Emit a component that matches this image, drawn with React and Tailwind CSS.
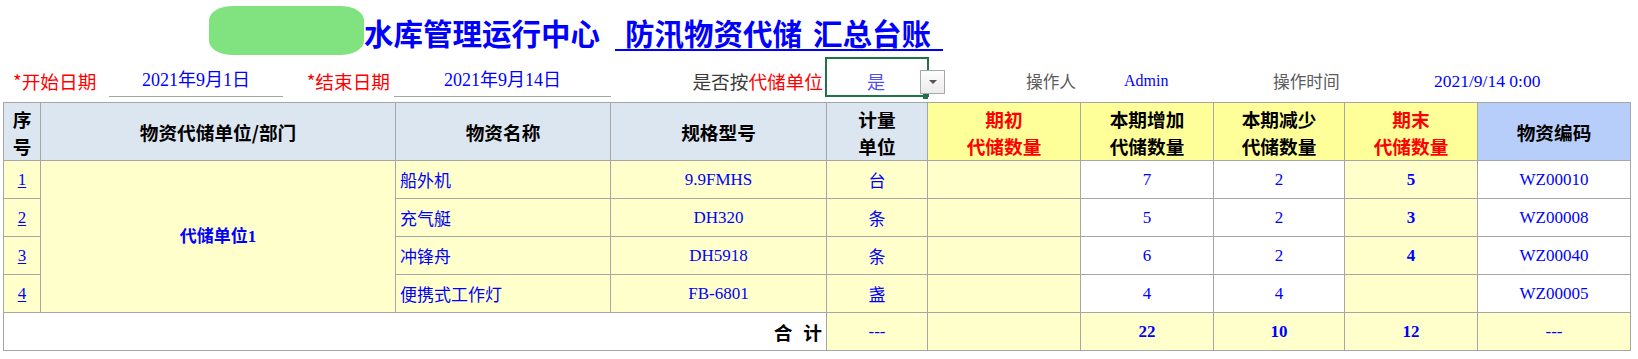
const sans = "font-['Noto_Sans_CJK_SC','Noto_Sans',sans-serif]";
const serif = "font-['Liberation_Serif','Noto_Sans_CJK_SC',serif]";

const rows = [
  { no: 1, name: "船外机", spec: "9.9FMHS", unit: "台", add: 7, sub: 2, end: 5, code: "WZ00010" },
  { no: 2, name: "充气艇", spec: "DH320", unit: "条", add: 5, sub: 2, end: 3, code: "WZ00008" },
  { no: 3, name: "冲锋舟", spec: "DH5918", unit: "条", add: 6, sub: 2, end: 4, code: "WZ00040" },
  { no: 4, name: "便携式工作灯", spec: "FB-6801", unit: "盏", add: 4, sub: 4, end: "", code: "WZ00005" },
];

// 表头、单元格公共样式
const th = "border border-[#a6a6a6] p-0 font-bold text-[18.67px] leading-[27px] text-center align-middle";
const td = "border border-[#a6a6a6] p-0 text-center align-middle text-[17px] text-[#0000ff]";

export default function App() {
  return (
    <div className="w-[1638px] h-[359px] bg-white overflow-hidden">
      {/* 标题 */}
      <div className="flex items-start h-[57px] pl-[209px]">
        <div className="mt-[6px] w-[155px] h-[49px] rounded-[24px/14px] bg-[#81e37f]" />
        <div className={`mt-[15px] flex text-[29.5px] leading-[34px] font-bold text-[#0000ff] ${sans}`}>
          <span>水库管理运行中心</span>
          <span className="ml-[15px] pl-[10px] pr-[12px] border-b-2 border-[#0000ff] flex">
            <span>防汛物资代储</span>
            <span className="w-[11px]" />
            <span>汇总台账</span>
          </span>
        </div>
      </div>

      {/* 查询条件 */}
      <div className="flex h-[40px] pl-[3px]">
        <div className={`w-[106px] flex items-end pb-[5px] pl-[10px] text-[18.67px] leading-[22px] text-[#ff0000] ${sans}`}>
          *开始日期
        </div>
        <div className={`w-[174px] flex items-end justify-center pb-[5px] border-b border-[#a6a6a6] text-[18px] leading-[22px] text-[#0000ff] ${serif}`}>
          2021年9月1日
        </div>
        <div className={`w-[111px] flex items-end justify-end pb-[5px] pr-[4px] text-[18.67px] leading-[22px] text-[#ff0000] ${sans}`}>
          *结束日期
        </div>
        <div className={`w-[217px] flex items-end justify-center pb-[5px] border-b border-[#a6a6a6] text-[18px] leading-[22px] text-[#0000ff] ${serif}`}>
          2021年9月14日
        </div>
        <div className={`w-[214px] flex items-end justify-end pb-[5px] pr-[2px] text-[18.67px] leading-[22px] text-[#3c3c3c] ${sans}`}>
          是否按<span className="text-[#ff0000]">代储单位</span>
        </div>
        <div className={`relative w-[104px] border-2 border-[#217346] flex items-center justify-center pt-[7px] pr-[2px] text-[18px] leading-[22px] text-[#5050f0] ${sans}`}>
          是
          <div className="absolute left-[93px] top-[11px] w-[25px] h-[24px] border border-[#a8a8a8] bg-gradient-to-b from-[#fdfdfd] to-[#ececec] flex items-center justify-center">
            <div className="w-0 h-0 border-l-[4px] border-r-[4px] border-t-[4px] border-l-transparent border-r-transparent border-t-[#555]" />
          </div>
          <div className="absolute left-[96px] top-[35px] w-[5px] h-[5px] bg-[#217346]" />
        </div>
        <div className="w-[97px]" />
        <div className={`w-[98px] flex items-end pb-[5px] text-[16.7px] leading-[22px] text-[#5a5a5a] ${sans}`}>操作人</div>
        <div className={`w-[149px] flex items-end pb-[5px] text-[16px] leading-[22px] text-[#0000ff] ${serif}`}>Admin</div>
        <div className={`w-[161px] flex items-end pb-[5px] text-[16.7px] leading-[22px] text-[#5a5a5a] ${sans}`}>操作时间</div>
        <div className={`flex items-end pb-[5px] text-[17.5px] leading-[22px] text-[#0000ff] ${serif}`}>2021/9/14 0:00</div>
      </div>

      {/* 台账表 */}
      <table className={`ml-[3px] mt-[5px] border-collapse table-fixed w-[1628px] ${sans}`}>
        <colgroup>
          <col className="w-[37px]" />
          <col className="w-[355px]" />
          <col className="w-[215px]" />
          <col className="w-[216px]" />
          <col className="w-[101px]" />
          <col className="w-[153px]" />
          <col className="w-[133px]" />
          <col className="w-[131px]" />
          <col className="w-[133px]" />
          <col className="w-[153px]" />
        </colgroup>
        <thead>
          <tr className="h-[58px]">
            <th className={`${th} bg-[#dce6f1] text-black`}>序<br />号</th>
            <th className={`${th} bg-[#dce6f1] text-black`}>物资代储单位/部门</th>
            <th className={`${th} bg-[#dce6f1] text-black`}>物资名称</th>
            <th className={`${th} bg-[#dce6f1] text-black`}>规格型号</th>
            <th className={`${th} bg-[#dce6f1] text-black`}>计量<br />单位</th>
            <th className={`${th} bg-[#ffff99] text-[#ff0000]`}>期初<br />代储数量</th>
            <th className={`${th} bg-[#ffff99] text-black`}>本期增加<br />代储数量</th>
            <th className={`${th} bg-[#ffff99] text-black`}>本期减少<br />代储数量</th>
            <th className={`${th} bg-[#ffff99] text-[#ff0000]`}>期末<br />代储数量</th>
            <th className={`${th} bg-[#b8cefa] text-black`}>物资编码</th>
          </tr>
        </thead>
        <tbody>
          {rows.map((r, i) => (
            <tr key={r.no} className="h-[38px]">
              <td className={`${td} bg-[#ffffcc] ${serif}`}>
                <a className="underline underline-offset-2">{r.no}</a>
              </td>
              {i === 0 && (
                <td rowSpan={4} className={`${td} bg-[#ffffcc] font-bold text-[17.5px] ${serif}`}>
                  代储单位1
                </td>
              )}
              <td className={`${td} bg-[#ffffcc] text-left pl-[4px]`}>{r.name}</td>
              <td className={`${td} bg-[#ffffcc] ${serif}`}>{r.spec}</td>
              <td className={`${td} bg-[#ffffcc]`}>{r.unit}</td>
              <td className={`${td} bg-[#ffffcc]`}></td>
              <td className={`${td} bg-white ${serif}`}>{r.add}</td>
              <td className={`${td} bg-white ${serif}`}>{r.sub}</td>
              <td className={`${td} bg-[#ffffcc] font-bold ${serif}`}>{r.end}</td>
              <td className={`${td} bg-white ${serif}`}>{r.code}</td>
            </tr>
          ))}
          <tr className="h-[38px]">
            <td colSpan={4} className={`${td} bg-white text-right pr-[4px] font-bold text-black text-[18.67px]`}>
              <span>合</span>
              <span className="ml-[11px]">计</span>
            </td>
            <td className={`${td} bg-[#ffffcc] ${serif}`}>---</td>
            <td className={`${td} bg-[#ffffcc]`}></td>
            <td className={`${td} bg-[#ffffcc] font-bold ${serif}`}>22</td>
            <td className={`${td} bg-[#ffffcc] font-bold ${serif}`}>10</td>
            <td className={`${td} bg-[#ffffcc] font-bold ${serif}`}>12</td>
            <td className={`${td} bg-[#ffffcc] ${serif}`}>---</td>
          </tr>
        </tbody>
      </table>
    </div>
  );
}
